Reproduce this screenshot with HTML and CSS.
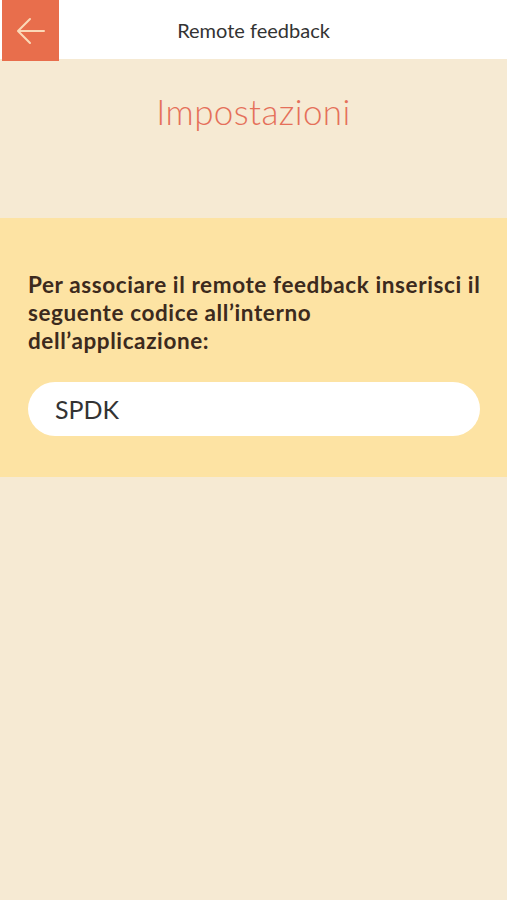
FILE: index.html
```html
<!DOCTYPE html>
<html lang="it">
<head>
    <meta charset="UTF-8">
    <meta name="viewport" content="width=device-width, initial-scale=1.0">
    <title>Remote feedback</title>
    <link rel="stylesheet" href="styles.css">
</head>
<body>
    <!-- Top bar -->
    <div class="topbar">
        <button class="back" aria-label="Indietro">
            <svg width="32" height="32" viewBox="0 0 32 32">
                <path d="M29 16H4M15 4L3 16l12 12" fill="none" stroke="#fbd9b8" stroke-width="2" stroke-linecap="round" stroke-linejoin="round"/>
            </svg>
        </button>
        <div class="topbar-title">Remote feedback</div>
    </div>

    <h1 class="page-title">Impostazioni</h1>

    <!-- Code section -->
    <div class="code-section">
        <p class="code-label">Per associare il remote feedback inserisci il seguente codice all’interno<br>dell’applicazione:</p>
        <div class="code-field">SPDK</div>
    </div>
</body>
</html>
```

FILE: styles.css
```css
body {
    font-family: Lato, "Open Sans", sans-serif;
    background-color: #f6ead3;
    margin: 0;
    padding: 0;
    height: 900px;
}

.topbar {
    position: relative;
    background-color: #fff;
    height: 59px;
    display: flex;
    align-items: center;
    justify-content: center;
}

.back {
    position: absolute;
    left: 2px;
    top: 0;
    width: 57px;
    height: 61px;
    background-color: #e86e4c;
    border: none;
    padding: 0;
    display: flex;
    align-items: center;
    justify-content: center;
}

.topbar-title {
    font-size: 20px;
    color: #333;
    padding-top: 1px;
}

.page-title {
    margin: 0;
    padding: 31px 0 0;
    height: 128px;
    text-align: center;
    font-size: 35px;
    font-weight: 300;
    color: #e5705a;
    letter-spacing: 0.4px;
}

.code-section {
    background-color: #fde3a3;
    padding: 53px 20px 41px 28px;
}

.code-label {
    margin: 0 0 27px;
    font-size: 22.5px;
    line-height: 28px;
    font-weight: 700;
    color: #3c2a1d;
    letter-spacing: 0.6px;
}

.code-field {
    background-color: #fff;
    height: 54px;
    margin-right: 7px;
    border-radius: 27px;
    padding-left: 27px;
    display: flex;
    align-items: center;
    font-size: 25px;
    color: #333;
}
```
